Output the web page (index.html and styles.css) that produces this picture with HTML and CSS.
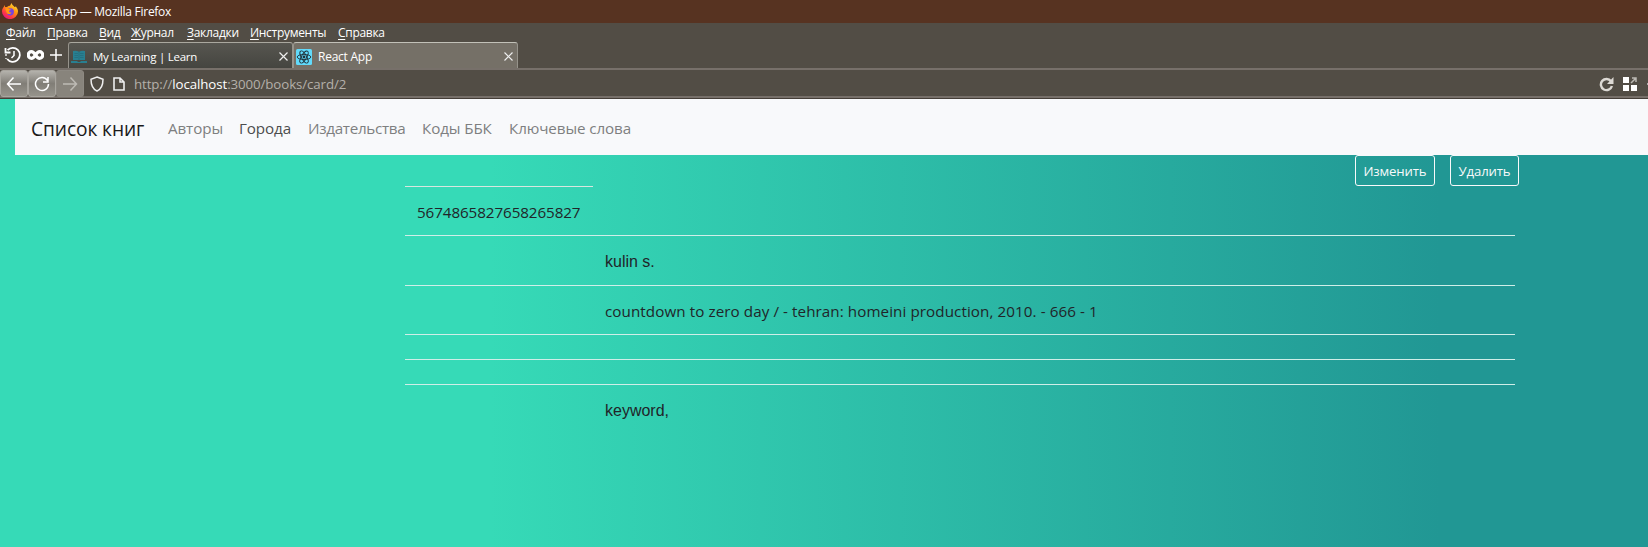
FILE: index.html
```
<!DOCTYPE html>
<html lang="ru">
<head>
<meta charset="utf-8">
<title>React App</title>
<link rel="stylesheet" href="styles.css">
</head>
<body>
<div class="titlebar">
  <svg class="firefox" width="16" height="16" viewBox="0 0 16 16"><defs><linearGradient id="fire" x1="1" y1="0" x2=".3" y2="1"><stop offset="0" stop-color="#fff44f"/><stop offset=".45" stop-color="#ff980e"/><stop offset=".8" stop-color="#ff3647"/><stop offset="1" stop-color="#e31587"/></linearGradient></defs><path fill="url(#fire)" d="M1 5 3 2v2l2 0c1-1 2-1.300 3-1.200L9.500 0c.5 2 2 2.500 3 4l1.500-.5c1 1.500 2 3 2 5a8 7.600 0 0 1-16 0C0 7 .3 6 1 5Z"/><circle cx="8.300" cy="8.800" r="3.600" fill="#7543e3"/><path fill="#ff980e" d="M3 5.500c2-1 3-.5 4 .5l2 .6c-.5 1-1.500 1-2 1.200 0 1.500 1 2 2.500 1.700-1 2-4 2-5 0C4 8 4 7 3 5.500Z"/></svg>
  <span class="title-text">React App — Mozilla Firefox</span>
</div>
<div class="menubar">
  <span class="m1"><u>Ф</u>айл</span><span class="m2"><u>П</u>равка</span><span class="m3"><u>В</u>ид</span><span class="m4"><u>Ж</u>урнал</span><span class="m5"><u>З</u>акладки</span><span class="m6"><u>И</u>нструменты</span><span class="m7"><u>С</u>правка</span>
</div>
<div class="tabbar">
  <div class="tools">
    <svg width="18" height="18" viewBox="0 0 18 18" fill="none" stroke="#fff"><path stroke-width="1.800" d="M3.600 4.200A7 7 0 1 1 3.200 13"/><path stroke-width="1.800" d="M1.500 2v4.500h5"/><path stroke-width="1.500" d="M10 5v4.500L7.500 12"/><path stroke-width="1.300" stroke-dasharray="2 2" d="M2 8v5"/></svg>
    <svg width="17" height="12" viewBox="0 0 18 12" fill="none" stroke="#fff" stroke-width="3.400"><path d="M9 6C7 3 6 2.500 4.800 2.500a3.500 3.500 0 0 0 0 7C6 9.500 7 9 9 6s3-3.500 4.200-3.500a3.500 3.500 0 0 1 0 7C12 9.500 11 9 9 6Z"/></svg>
    <svg width="14" height="14" viewBox="0 0 14 14" stroke="#fff" stroke-width="1.500"><path d="M7 1v12M1 7h12"/></svg>
  </div>
  <div class="tab">
    <svg width="16" height="14" viewBox="0 0 16 14"><path fill="#287f91" d="M2 1q3-1 6 .7Q11 0 14 1v9H2ZM0 11h6l1 1h2l1-1h6v2H0Z"/><path stroke="#246c7c" stroke-width=".8" fill="none" d="M8 2v8M3.500 3.500H7M3.500 5.500H7M3.500 7.500H7M9 3.500h3.500M9 5.500h3.500M9 7.500h3.500"/></svg>
    <span class="tab-a">My Learning | Learn</span>
    <svg class="close" width="9" height="9" viewBox="0 0 9 9" stroke="#eee" stroke-width="1.200"><path d="m.5.5 8 8m0-8-8 8"/></svg>
  </div>
  <div class="tab active">
    <svg width="16" height="16" viewBox="0 0 16 16"><rect width="16" height="16" rx="1.500" fill="#61dafb"/><g fill="none" stroke="#20323a" stroke-width=".9"><ellipse cx="8" cy="8" rx="6.800" ry="2.600"/><ellipse cx="8" cy="8" rx="6.800" ry="2.600" transform="rotate(60 8 8)"/><ellipse cx="8" cy="8" rx="6.800" ry="2.600" transform="rotate(120 8 8)"/></g><circle cx="8" cy="8" r="1.400" fill="#20323a"/></svg>
    <span class="tab-b">React App</span>
    <svg class="close" width="9" height="9" viewBox="0 0 9 9" stroke="#eee" stroke-width="1.200"><path d="m.5.5 8 8m0-8-8 8"/></svg>
  </div>
</div>
<div class="toolbar">
  <div class="key"><svg width="16" height="16" viewBox="0 0 16 16" fill="none" stroke="#fff" stroke-width="1.500"><path d="M15 8H1.500m6-6.500L1.500 8l6 6.500"/></svg></div>
  <div class="key"><svg width="16" height="16" viewBox="0 0 16 16" fill="none" stroke="#fff" stroke-width="1.500"><path d="M13.500 4.500A6.500 6.500 0 1 0 14.500 8M14 1v5H9"/></svg></div>
  <div class="key off"><svg width="16" height="16" viewBox="0 0 16 16" fill="none" stroke="#bdbab4" stroke-width="1.500"><path d="M1 8h13.500m-6-6.500 6 6.500-6 6.500"/></svg></div>
  <div class="address">
    <svg width="14" height="16" viewBox="0 0 14 16" fill="none" stroke="#eee" stroke-width="1.500"><path d="M7 1 13 3.200C13 9 11.500 13 7 15 2.500 13 1 9 1 3.200Z"/></svg>
    <svg class="page-icon" width="12" height="14" viewBox="0 0 12 14" fill="none" stroke="#eee" stroke-width="1.600"><path d="M1 1h6l4 4v8H1ZM7 1v4h4"/></svg>
    <span class="url">http://<b>localhost</b>:3000/books/card/2</span>
    <svg class="reload" width="15" height="15" viewBox="0 0 15 15" fill="none" stroke="#dcd9d4" stroke-width="2.400"><path d="M12 4.200a5.600 5.600 0 1 0 .9 4.800"/><path fill="#dcd9d4" stroke="none" d="M14.500 0v7H8Z"/></svg>
    <svg class="grid-icon" width="14" height="14" viewBox="0 0 14 14"><path fill="#fff" d="M0 0h6v6H0ZM0 8h6v6H0ZM8 8h6v6H8Z"/><path stroke="#bbb8b2" stroke-width="1.500" fill="none" d="M8 6l5-5M9 1h4v4"/></svg>
    <i class="sliver"></i>
  </div>
</div>
<main class="page">
  <nav class="navbar">
    <span class="brand">Список книг</span>
    <a class="l1">Авторы</a><a class="l2 current">Города</a><a class="l3">Издательства</a><a class="l4">Коды ББК</a><a class="l5">Ключевые слова</a>
  </nav>
  <div class="actions"><button class="edit">Изменить</button><button class="delete">Удалить</button></div>
  <div class="card">
    <div class="row first"><span class="isbn">5674865827658265827</span></div>
    <div class="row"><span class="cell plain">kulin s.</span></div>
    <div class="row mid"><span class="cell desc">countdown to zero day / - tehran: homeini production, 2010. - 666 - 1</span></div>
    <div class="row empty"></div>
    <div class="row empty"></div>
    <div class="row"><span class="cell plain">keyword,</span></div>
  </div>
</main>
</body>
</html>
```
FILE: styles.css
```
* { box-sizing: border-box; }
body { margin: 0; width: 1648px; height: 547px; overflow: hidden; font-family: "Open Sans", "Noto Sans", sans-serif; background: #524d45; white-space: nowrap; display: flex; flex-direction: column; }
svg { display: block; flex: none; }
.titlebar { height: 23px; background: #573321; color: #fff; display: flex; align-items: center; padding-left: 2px; font-size: 12px; }
.firefox { margin-top: -1px; }
.title-text { margin-left: 5px; letter-spacing: -.27px; line-height: 23px; }
.menubar { height: 19px; color: #fff; font-size: 12px; line-height: 20px; display: flex; padding-left: 6px; letter-spacing: -.3px; }
.menubar u { text-underline-offset: 2px; }
.m1 { width: 41px; } .m2 { width: 52px; } .m3 { width: 32px; } .m4 { width: 56px; } .m5 { width: 63px; } .m6 { width: 88px; }
.tabbar { height: 26px; display: flex; color: #fff; font-size: 12px; }
.tools { width: 68px; display: flex; align-items: center; padding-left: 4px; gap: 5px; }
.tab { width: 225px; height: 26px; border: 1px solid #96938b; border-top-color: #aaa89f; border-bottom: 0; border-radius: 3px 3px 0 0; background: linear-gradient(#575650, #454540); display: flex; align-items: center; padding: 2px 4px 0 2px; }
.tab.active { background: #757067; border-top-color: #c2c1b8; }
.tab span { margin-left: 6px; letter-spacing: -.25px; }
.tab .tab-a { font-size: 11.500px; }
.close { margin-left: auto; }
.toolbar { height: 31px; border-top: 2px solid #77706a; border-bottom: 1px solid #453e38; box-shadow: inset 0 -2px #77706a; display: flex; }
.key { width: 28px; height: 27px; border: 1px solid #a9a69f; border-radius: 3px; background: linear-gradient(#b4b2ac, #817e77 50%, #96938b); display: flex; align-items: center; justify-content: center; }
.key.off { border-color: #8d8982; background: #88847c; }
.address { flex: 1; height: 28px; display: flex; align-items: center; padding-left: 6px; }
.page-icon { margin-left: 9px; }
.url { margin-left: 9px; font-size: 13.300px; color: #b4b0aa; letter-spacing: -.1px; line-height: 26px; }
.url b { color: #fff; font-weight: 400; }
.reload { margin-left: auto; }
.grid-icon { margin-left: 9px; }
.sliver { width: 1px; height: 2px; margin-left: 10px; background: #aaa; }
.page { flex: 1; background: linear-gradient(90deg, #36dab7 0, #36dab7 490px, #219794 1440px, #219794 100%); }
.navbar { margin-left: 15px; height: 56px; padding-left: 16px; background: #f8f9fb; display: flex; line-height: 59px; font-size: 15.200px; color: #7e7f80; letter-spacing: -.1px; }
.brand { width: 137px; font-size: 19.200px; line-height: 60px; color: #1a1a1a; }
.current { color: #4c4d4d; }
.l1 { width: 71px; } .l2 { width: 69px; } .l3 { width: 114px; letter-spacing: -.3px; } .l4 { width: 87px; }
.actions { height: 31px; display: flex; padding-left: 1355px; gap: 15px; }
.actions button { height: 31px; border: 1px solid #f8f9fa; border-radius: 3px; background: none; color: #f8f9fa; padding: 1px 0 0; font: 13.200px "Open Sans", sans-serif; letter-spacing: -.15px; }
.edit { width: 80px; } .delete { width: 69px; }
.card { width: 1110px; margin-left: 405px; font-size: 16px; color: #212529; }
.row { height: 50px; border-top: 1px solid #cfeee8; padding-top: 13px; line-height: 25px; }
.row.first { height: 49px; width: 188px; padding-left: 12px; border-top-color: #d8e6df; }
.row.mid { height: 49px; }
.row.empty { height: 25px; padding: 0; }
.cell { margin-left: 200px; }
.plain { font-family: "Liberation Sans", Arial, sans-serif; }
.isbn { font-size: 15.200px; letter-spacing: -.08px; }
.desc { font-size: 15.200px; letter-spacing: .08px; }
```
